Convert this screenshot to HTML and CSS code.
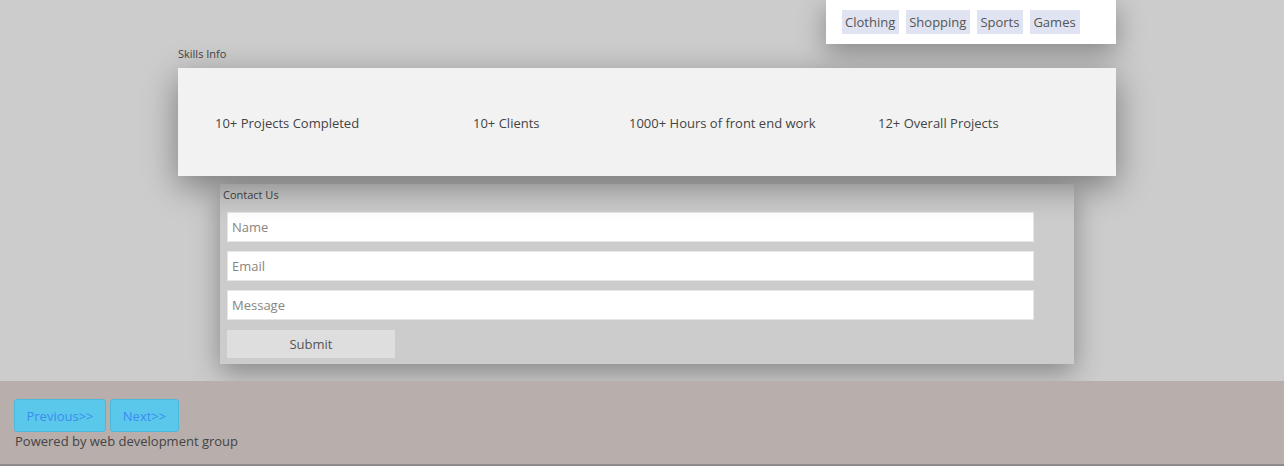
FILE: index.html
```html
<!DOCTYPE html>
<html>
<head>
<meta charset="utf-8">
<link rel="stylesheet" href="styles.css">
</head>
<body>
<main class="main">
  <div class="container">
    <div class="interests-row">
      <div class="interests-card">
        <span class="tag">Clothing</span>
        <span class="tag">Shopping</span>
        <span class="tag">Sports</span>
        <span class="tag">Games</span>
      </div>
    </div>
    <div class="section-label">Skills Info</div>
    <div class="skills-card">
      <div class="skill s1">10+ Projects Completed</div>
      <div class="skill s2">10+ Clients</div>
      <div class="skill s3">1000+ Hours of front end work</div>
      <div class="skill s4">12+ Overall Projects</div>
    </div>
    <form class="contact">
      <div class="contact-label">Contact Us</div>
      <input class="field" type="text" placeholder="Name">
      <input class="field" type="text" placeholder="Email">
      <input class="field" type="text" placeholder="Message">
      <button class="submit" type="button">Submit</button>
    </form>
  </div>
</main>
<footer class="footer">
  <div class="nav">
    <button class="nav-btn prev" type="button">Previous&gt;&gt;</button>
    <button class="nav-btn next" type="button">Next&gt;&gt;</button>
  </div>
  <div class="powered">Powered by web development group</div>
</footer>
</body>
</html>
```
FILE: styles.css
```css
html, body {
  margin: 0;
  padding: 0;
}
body {
  font-family: "Open Sans", "Noto Sans", sans-serif;
  color: #444;
  background: #b8afad;
  width: 1284px;
  height: 466px;
  overflow: hidden;
}
.main {
  background: #cccccc;
  height: 381px;
  overflow: hidden;
}
.container {
  margin-left: 178px;
  width: 938px;
}
.interests-row {
  display: flex;
  justify-content: flex-end;
}
.interests-card {
  width: 290px;
  height: 44px;
  box-sizing: border-box;
  background: #ffffff;
  padding: 10px 0 0 16px;
  display: flex;
  gap: 7px;
  box-shadow: 0 8px 28px rgba(0, 0, 0, 0.35);
}
.tag {
  background: #e0e3f1;
  height: 24px;
  line-height: 25px;
  padding: 0 4px 0 3px;
  font-size: 13px;
  color: #555;
}
.section-label {
  font-size: 11px;
  line-height: 14px;
  padding-top: 3px;
  height: 21px;
  color: #444;
}
.skills-card {
  background: #f2f2f2;
  height: 108px;
  display: flex;
  align-items: center;
  box-shadow: 0 10px 32px rgba(0, 0, 0, 0.4);
  position: relative;
  z-index: 1;
  font-size: 13px;
  color: #444;
  padding-top: 2px;
  box-sizing: border-box;
}
.skill { white-space: nowrap; }
.s1 { margin-left: 37px; width: 258px; }
.s2 { width: 156px; }
.s3 { width: 249px; }
.contact {
  margin: 8px 42px 0;
  background: #cccccc;
  padding: 4px 40px 6px 7px;
  display: flex;
  flex-direction: column;
  box-shadow: 0 8px 26px rgba(0, 0, 0, 0.35);
}
.contact-label {
  font-size: 11px;
  line-height: 14px;
  margin-left: -4px;
  height: 24px;
  color: #444;
}
.field {
  width: 807px;
  height: 30px;
  box-sizing: border-box;
  margin: 0 0 9px 0;
  border: 1px solid #e6e6e6;
  background: #fff;
  padding: 0 4px;
  font-family: "Open Sans", "Noto Sans", sans-serif;
  font-size: 13px;
  color: #555;
  outline: none;
}
.field::placeholder {
  color: #8a8580;
}
.submit {
  width: 168px;
  height: 28px;
  margin-top: 1px;
  border: none;
  background: #dedede;
  font-family: "Open Sans", "Noto Sans", sans-serif;
  font-size: 13px;
  color: #555;
  padding: 0;
}
.footer {
  height: 85px;
  box-sizing: border-box;
  padding: 18px 0 0 14px;
  background: #b8afad;
  border-bottom: 2px solid #8f8b8b;
}
.nav {
  display: flex;
  gap: 4px;
}
.nav-btn {
  height: 33px;
  border: 1px solid #4ab9dc;
  border-radius: 3px;
  background: #5ac8ea;
  color: #3a8cf2;
  font-family: "Open Sans", "Noto Sans", sans-serif;
  font-size: 13px;
  padding: 0;
}
.prev { width: 92px; }
.next { width: 69px; }
.powered {
  margin-top: 0;
  margin-left: 1px;
  font-size: 13px;
  color: #444;
}
```
